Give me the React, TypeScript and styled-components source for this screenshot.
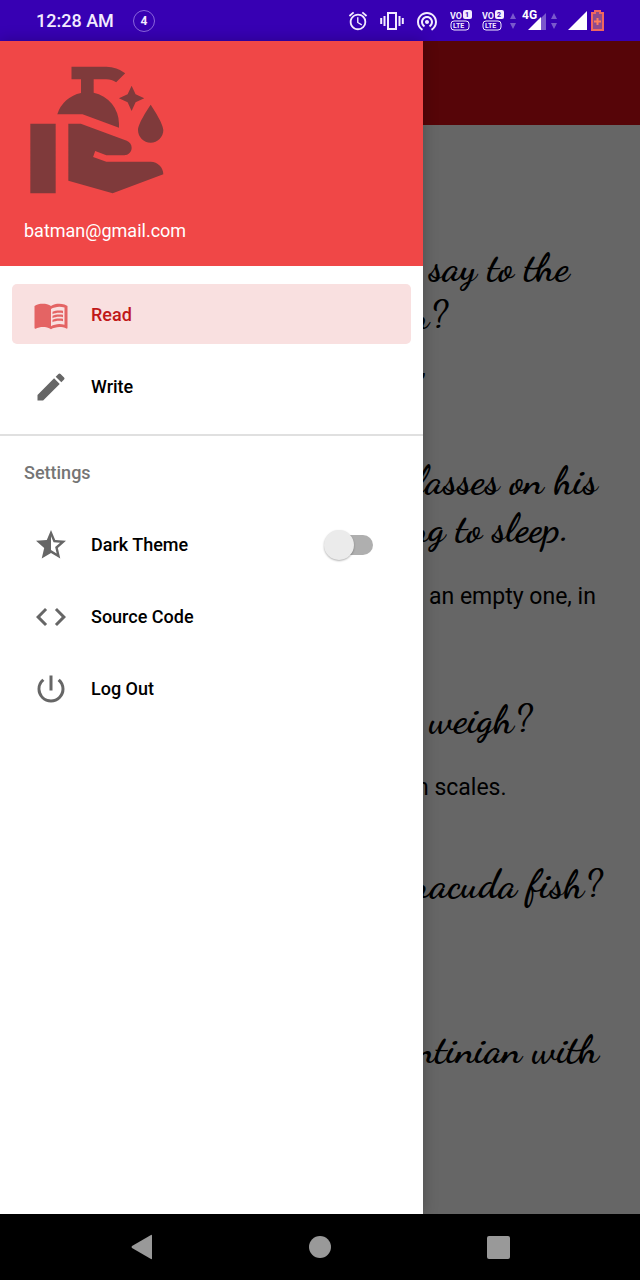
import React, { useState } from "react";
import styled, { createGlobalStyle } from "styled-components";
import {
  MdAlarm,
  MdCleanHands,
  MdCode,
  MdEdit,
  MdMenuBook,
  MdPowerSettingsNew,
  MdStarHalf,
  MdWifiTethering,
} from "react-icons/md";

const GlobalStyle = createGlobalStyle`
  *, *::before, *::after { box-sizing: border-box; }
  body {
    margin: 0;
    font-family: Roboto, "Liberation Sans", sans-serif;
    background: #000;
  }
  svg { display: block; flex: none; }
`;

const Screen = styled.div`
  display: flex;
  flex-direction: column;
  min-height: 100vh;
`;

/* ---------- status bar ---------- */

const StatusBar = styled.header`
  display: flex;
  align-items: center;
  justify-content: space-between;
  height: 41px;
  padding: 0 36px;
  background: #3700b3;
  color: #f3ecff;
`;

const StatusGroup = styled.div<{ $gap: number }>`
  display: flex;
  align-items: center;
  gap: ${(p) => p.$gap}px;
`;

const Clock = styled.time`
  font-size: 18px;
  font-weight: 500;
  line-height: 24px;
`;

const CountRing = styled.span`
  display: grid;
  place-items: center;
  width: 22px;
  height: 22px;
  border: 1px solid #8a66dc;
  border-radius: 50%;
  font-size: 12px;
  font-weight: 700;
  line-height: 20px;
`;

const BadgeText = styled.text`
  font-family: Roboto, "Liberation Sans", sans-serif;
  font-weight: 700;
`;

const VibrateIcon = () => (
  <svg width="24" height="20" viewBox="0 0 24 20" fill="none" stroke="currentColor" strokeWidth="2">
    <rect x="8" y="2" width="8" height="16" />
    <path d="M4.500 5v10M1.200 7v6M19.500 5v10M22.800 7v6" />
  </svg>
);

const VolteIcon = ({ sim }: { sim: string }) => (
  <svg width="22" height="22" viewBox="0 0 22 22" fill="currentColor">
    <BadgeText x="0" y="9" fontSize="9">VO</BadgeText>
    <rect x="13" y="0" width="9" height="9" rx="2" />
    <BadgeText x="15" y="7" fontSize="7" fill="#3700b3">{sim}</BadgeText>
    <rect x="1" y="11" width="18" height="9" rx="3" fill="none" stroke="currentColor" strokeWidth="1" />
    <BadgeText x="3" y="18" fontSize="7">LTE</BadgeText>
  </svg>
);

const TrafficIcon = () => (
  <svg width="6" height="16" viewBox="0 0 6 16" fill="#7a58cc">
    <path d="M0 6 3 0l3 6zM0 10h6l-3 6z" />
  </svg>
);

const MobileSignalIcon = () => (
  <svg width="25" height="22" viewBox="0 0 25 22">
    <path d="M24 3v17h-5V8z" fill="#7a58cc" />
    <path d="M6 20 19 7v13z" fill="#fff" />
    <BadgeText x="0" y="9" fontSize="12" fill="#fff">4G</BadgeText>
  </svg>
);

const SignalIcon = () => (
  <svg width="19" height="19" viewBox="0 0 19 19" fill="#fff">
    <path d="M19 0v19H0z" />
  </svg>
);

const BatteryIcon = () => (
  <svg width="13" height="21" viewBox="0 0 13 21">
    <path d="M4 1h5v2h3v17H1V3h3z" fill="#8d4a8e" stroke="#f0675f" strokeWidth="2" />
    <path d="M6.500 8v7M3 11.500h7" stroke="#ff7d5c" strokeWidth="2" />
  </svg>
);

/* ---------- drawer ---------- */

const Main = styled.div`
  display: grid;
  grid-template-columns: 423fr 217fr;
  flex: 1;
`;

const Drawer = styled.aside`
  position: relative;
  z-index: 1;
  display: flex;
  flex-direction: column;
  background: #fff;
  box-shadow: 0 0 14px rgba(0, 0, 0, 0.25);
`;

const Profile = styled.div`
  display: flex;
  flex-direction: column;
  justify-content: space-between;
  height: 225px;
  padding: 13px 24px 23px;
  background: #f04747;
  color: #7f3a3b;
`;

const Email = styled.p`
  margin: 0;
  color: #fff;
  font-size: 18px;
  line-height: 24px;
`;

const Menu = styled.nav`
  display: flex;
  flex-direction: column;
  gap: 12px;
  padding: 18px 12px;
`;

const Settings = styled.section`
  display: flex;
  flex-direction: column;
  gap: 12px;
  padding: 25px 12px;
  border-top: 2px solid #e0e0e0;
`;

const SectionTitle = styled.h2`
  margin: 0 0 17px;
  padding: 0 12px;
  color: #757575;
  font-size: 18px;
  font-weight: 500;
  line-height: 24px;
`;

const rowStyle = `
  display: flex;
  align-items: center;
  gap: 22px;
  width: 100%;
  height: 60px;
  padding: 1px 38px 0 21px;
  border: 0;
  border-radius: 5px;
  font: 500 18px/24px Roboto, "Liberation Sans", sans-serif;
  text-align: left;
  text-decoration: none;
  cursor: pointer;
  svg { width: 36px; height: 36px; }
`;

const MenuButton = styled.button<{ $active?: boolean }>`
  ${rowStyle}
  background: ${(p) => (p.$active ? "#f9e0e0" : "transparent")};
  color: ${(p) => (p.$active ? "#c01818" : "#000")};
  svg { color: ${(p) => (p.$active ? "#e46464" : "#666")}; }
`;

const MenuLink = styled.a`
  ${rowStyle}
  color: #000;
  svg { color: #666; }
`;

const SwitchRow = styled.label`
  ${rowStyle}
  color: #000;
  svg { color: #666; }
`;

const Switch = styled.input`
  appearance: none;
  display: flex;
  align-items: center;
  width: 49px;
  height: 32px;
  margin: 0 0 0 auto;
  cursor: pointer;

  &::before {
    content: "";
    width: 38px;
    height: 20px;
    margin-left: 11px;
    border-radius: 10px;
    background: #afafaf;
  }

  &::after {
    content: "";
    width: 30px;
    height: 30px;
    margin-left: -49px;
    border-radius: 50%;
    background: #ebebeb;
    box-shadow: 0 1px 2px rgba(0, 0, 0, 0.3);
  }

  &:checked::before { background: #f0a0a0; }
  &:checked::after { margin-left: -30px; background: #f04747; }
`;

/* ---------- dimmed feed ---------- */

const Feed = styled.main`
  min-width: 0;
  overflow: hidden;
  background: #666;
  color: #000;
`;

const AppBar = styled.div`
  height: 84px;
  background: #560508;
`;

const FeedList = styled.div`
  display: flex;
  flex-direction: column;
  gap: 59px;
  padding-top: 118px;
`;

/* How far the drawer covers the first glyph of a line. */
type Edge = "clear" | "touching" | "partial" | "covered";
const indent: Record<Edge, number> = { clear: 6, touching: -2, partial: -7, covered: -13 };

const JokeTitle = styled.h3`
  margin: 0 0 32px;
  font-family: "Dancing Script", "Liberation Serif", serif;
  font-size: 40px;
  font-weight: 700;
  line-height: 48px;
`;

const JokeBody = styled.p<{ $lines: number }>`
  min-height: ${(p) => p.$lines * 26}px;
  margin: 0;
  font-size: 23px;
  line-height: 26px;
`;

const Line = styled.span<{ $edge: Edge }>`
  display: block;
  text-indent: ${(p) => indent[p.$edge]}px;
  white-space: nowrap;
`;

type TextLine = [string, Edge];
const jokes: { title: TextLine[]; body: TextLine[]; lines: number }[] = [
  { title: [["say to the", "clear"], ["n?", "covered"]], body: [["’", "touching"]], lines: 1 },
  { title: [["lasses on his", "partial"], ["ng to sleep.", "covered"]], body: [["an empty one, in", "clear"]], lines: 2 },
  { title: [["weigh?", "clear"]], body: [["n scales.", "partial"]], lines: 1 },
  { title: [["racuda fish?", "partial"]], body: [], lines: 1 },
  { title: [["ntinian with", "partial"]], body: [], lines: 1 },
];

const Lines = ({ items }: { items: TextLine[] }) => (
  <>
    {items.map(([text, edge]) => (
      <Line key={text} $edge={edge}>{text}</Line>
    ))}
  </>
);

/* ---------- navigation bar ---------- */

const NavBar = styled.footer`
  display: flex;
  align-items: center;
  justify-content: space-between;
  height: 66px;
  padding: 0 20%;
  background: #000;
`;

const NavButton = styled.button`
  display: grid;
  place-items: center;
  width: 28px;
  height: 48px;
  padding: 0;
  border: 0;
  background: none;
  color: #999;
  cursor: pointer;
`;

export default function App() {
  const [dark, setDark] = useState(false);

  return (
    <Screen>
      <GlobalStyle />
      <StatusBar>
        <StatusGroup $gap={19}>
          <Clock>12:28 AM</Clock>
          <CountRing>4</CountRing>
        </StatusGroup>
        <StatusGroup $gap={11}>
          <MdAlarm size={22} />
          <VibrateIcon />
          <MdWifiTethering size={24} />
          <StatusGroup $gap={6}>
            <StatusGroup $gap={10}>
              <VolteIcon sim="1" />
              <VolteIcon sim="2" />
            </StatusGroup>
            <TrafficIcon />
            <StatusGroup $gap={4}>
              <MobileSignalIcon />
              <TrafficIcon />
            </StatusGroup>
          </StatusGroup>
          <StatusGroup $gap={4}>
            <SignalIcon />
            <BatteryIcon />
          </StatusGroup>
        </StatusGroup>
      </StatusBar>

      <Main>
        <Drawer>
          <Profile>
            <MdCleanHands size={152} />
            <Email>batman@gmail.com</Email>
          </Profile>
          <Menu>
            <MenuButton $active><MdMenuBook />Read</MenuButton>
            <MenuButton><MdEdit />Write</MenuButton>
          </Menu>
          <Settings>
            <SectionTitle>Settings</SectionTitle>
            <SwitchRow>
              <MdStarHalf />
              Dark Theme
              <Switch type="checkbox" checked={dark} onChange={(e) => setDark(e.target.checked)} />
            </SwitchRow>
            <MenuLink href="#source"><MdCode />Source Code</MenuLink>
            <MenuButton><MdPowerSettingsNew />Log Out</MenuButton>
          </Settings>
        </Drawer>

        <Feed>
          <AppBar />
          <FeedList>
            {jokes.map((joke) => (
              <article key={joke.title[0][0]}>
                <JokeTitle><Lines items={joke.title} /></JokeTitle>
                <JokeBody $lines={joke.lines}><Lines items={joke.body} /></JokeBody>
              </article>
            ))}
          </FeedList>
        </Feed>
      </Main>

      <NavBar>
        <NavButton aria-label="Back">
          <svg width="24" height="26" viewBox="0 0 24 26" fill="currentColor">
            <path d="M22 1.500v23q0 1-1 .5L2 14q-1-1 0-2L21 1q1-.5 1 .5z" />
          </svg>
        </NavButton>
        <NavButton aria-label="Home">
          <svg width="22" height="22" viewBox="0 0 22 22" fill="currentColor">
            <circle cx="11" cy="11" r="11" />
          </svg>
        </NavButton>
        <NavButton aria-label="Recent apps">
          <svg width="23" height="23" viewBox="0 0 23 23" fill="currentColor">
            <rect width="23" height="23" rx="2" />
          </svg>
        </NavButton>
      </NavBar>
    </Screen>
  );
}
